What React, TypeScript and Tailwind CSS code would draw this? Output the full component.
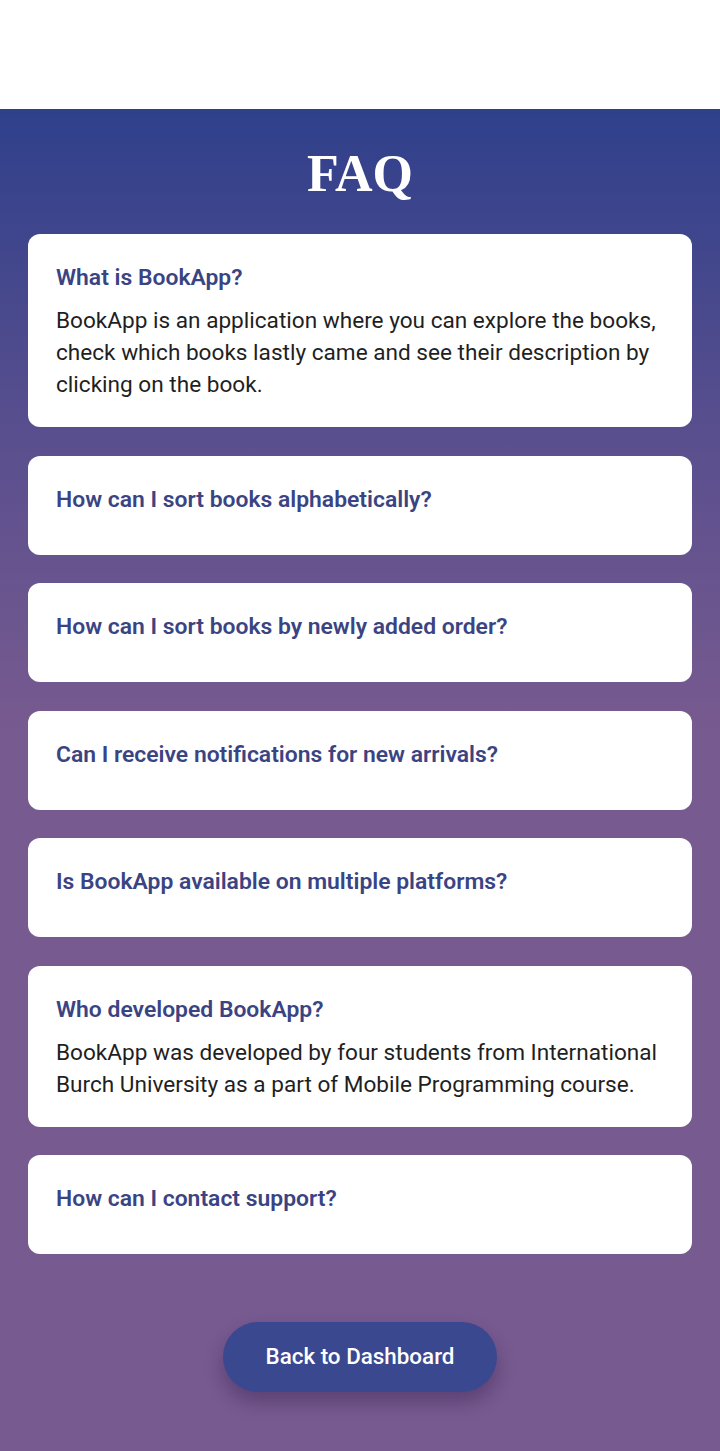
const FAQS = [
  {
    q: "What is BookApp?",
    a: "BookApp is an application where you can explore the books, check which books lastly came and see their description by clicking on the book.",
  },
  { q: "How can I sort books alphabetically?" },
  { q: "How can I sort books by newly added order?" },
  { q: "Can I receive notifications for new arrivals?" },
  { q: "Is BookApp available on multiple platforms?" },
  {
    q: "Who developed BookApp?",
    a: "BookApp was developed by four students from International Burch University as a part of Mobile Programming course.",
  },
  { q: "How can I contact support?" },
];

export default function App() {
  return (
    <div className="min-h-[1451px] bg-white font-['Roboto',sans-serif]">
      <div className="h-[109px] bg-white" />

      <section className="bg-[linear-gradient(to_bottom,#2f408b_0px,#5a4f8e_330px,#775a8f_620px,#775a8f_100%)] px-[28px] pt-[30px] pb-[59px]">
        <h1 className="text-center font-['Liberation_Serif',serif] text-[52px] font-bold leading-[70px] text-white mb-[25px]">
          FAQ
        </h1>

        <div className="flex flex-col gap-[28.5px]">
          {FAQS.map((faq, index) => (
            <div
              key={faq.q + index}
              className={
                faq.a
                  ? "rounded-[12px] bg-white px-[28px] pt-[30px] pb-[26px]"
                  : "rounded-[12px] bg-white px-[28px] pt-[30px] pb-[28px]"
              }
            >
              <h3 className="text-[22.9px] font-semibold leading-[28px] text-[#3b4483] mb-[13px]">
                {faq.q}
              </h3>
              {faq.a && (
                <p className="text-[22.6px] leading-[32px] text-[#1f1f1f]">{faq.a}</p>
              )}
            </div>
          ))}
        </div>

        <div className="flex justify-center mt-[68px]">
          <button className="h-[70px] w-[274px] rounded-full bg-[#3a4890] text-[22.4px] font-medium text-white shadow-[0_10px_18px_rgba(40,20,70,0.35)]">
            Back to Dashboard
          </button>
        </div>
      </section>
    </div>
  );
}
